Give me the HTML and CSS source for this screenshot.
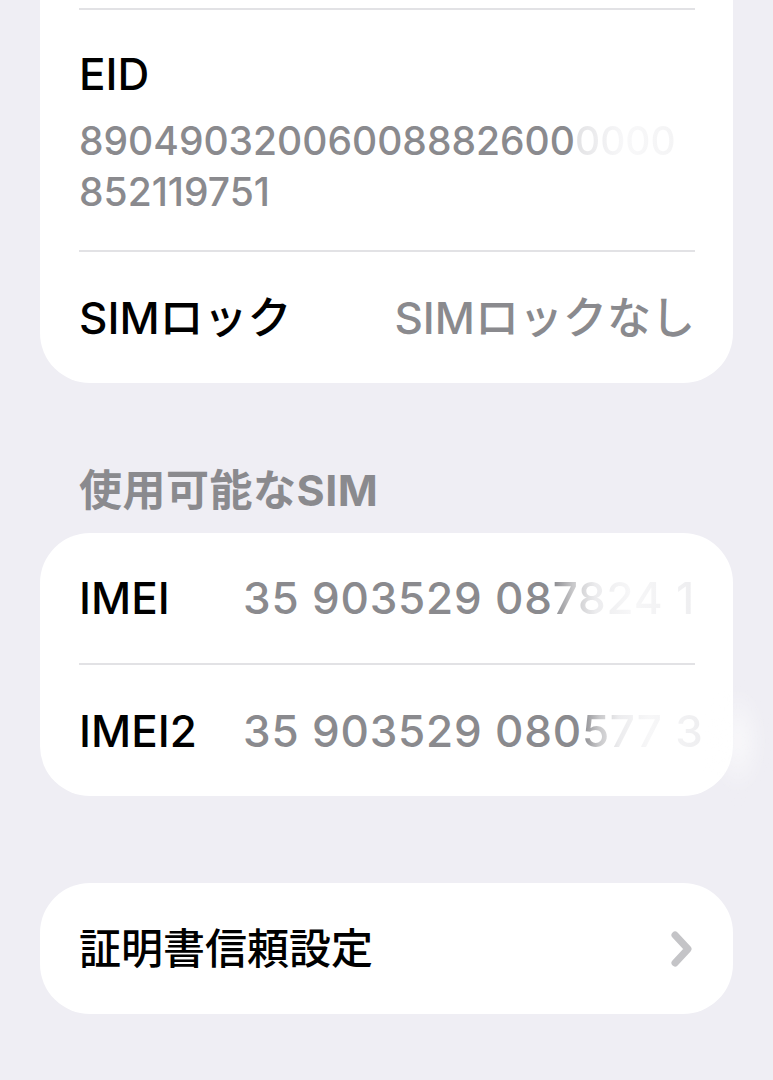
FILE: index.html
```html
<!DOCTYPE html>
<html lang="ja">
<head>
    <meta charset="UTF-8">
    <meta name="viewport" content="width=device-width, initial-scale=1.0">
    <title>情報</title>
    <link rel="stylesheet" href="styles.css">
</head>
<body>
    <div class="screen">
        <div class="card card-top">
            <div class="row row-eid">
                <div class="label">EID</div>
                <div class="eid-value">89049032006008882600<span class="fade fade-eid">0000</span><br>852119751</div>
            </div>
            <div class="row">
                <div class="label">SIMロック</div>
                <div class="value">SIMロックなし</div>
            </div>
        </div>

        <div class="section-title">使用可能なSIM</div>

        <div class="card card-glow">
            <div class="row row-first">
                <div class="label imei-label">IMEI</div>
                <div class="value imei">35 903529 08<span class="fade fade-imei">7824 1</span></div>
            </div>
            <div class="row">
                <div class="label imei-label">IMEI2</div>
                <div class="value imei">35 903529 080<span class="fade fade-imei">577 3</span></div>
            </div>
        </div>

        <div class="card card-link">
            <div class="row row-first">
                <div class="label label-kanji">証明書信頼設定</div>
                <svg class="chevron" width="26" height="38" viewBox="0 0 26 38">
                    <path d="M6 5 L19 19 L6 33" fill="none" stroke="#c4c4c7" stroke-width="7" stroke-linecap="round" stroke-linejoin="round"/>
                </svg>
            </div>
        </div>
    </div>
</body>
</html>
```

FILE: styles.css
```css
body {
    margin: 0;
    padding: 0;
    background: #efeef4;
    font-family: Inter, "Noto Sans CJK JP", sans-serif;
    color: #000;
    overflow: hidden;
}

.screen {
    padding: 0 40px;
    height: 1080px;
    box-sizing: border-box;
}

.card {
    background: #fff;
    border-radius: 50px;
    position: relative;
}

.card-top {
    border-radius: 0 0 50px 50px;
    padding-top: 8px;
}

.row {
    display: flex;
    align-items: center;
    justify-content: space-between;
    margin: 0 38px 0 39px;
    height: 131px;
    border-top: 2px solid #e2e2e5;
}

.row-first {
    border-top: none;
    height: 130px;
}

.card-link .row-first {
    height: 131px;
}

.row-eid {
    display: block;
    height: auto;
    padding: 38px 0 33px;
}

.label {
    font-size: 44px;
    line-height: 52px;
    font-weight: 500;
    white-space: nowrap;
}

.label-kanji {
    font-size: 42px;
}

.eid-value {
    margin-top: 15px;
    font-size: 39px;
    line-height: 51px;
    font-weight: 500;
    color: #8a8a8e;
    white-space: nowrap;
}

.value {
    font-size: 44px;
    line-height: 52px;
    font-weight: 500;
    color: #8a8a8e;
    white-space: nowrap;
}

.imei-label {
    width: 164px;
    flex: none;
}

.imei {
    flex: 1;
    letter-spacing: 0.8px;
}

.fade {
    -webkit-background-clip: text;
    background-clip: text;
    color: transparent;
}

.fade-eid {
    background-image: linear-gradient(90deg, #e2e2e4 0%, #efeff1 25%, #f8f8f9 50%, #f4f4f5 100%);
}

.fade-imei {
    background-image: linear-gradient(90deg, #8a8a8e 0%, #c8c8ca 14%, #ececee 30%, #f7f7f8 55%, #eeeef0 100%);
}

.section-title {
    margin: 82px 0 18px 39px;
    font-size: 43px;
    line-height: 50px;
    font-weight: 700;
    letter-spacing: 0.5px;
    color: #8a8a8e;
}

.card-glow::after {
    content: '';
    position: absolute;
    right: -30px;
    bottom: 0;
    width: 50px;
    height: 110px;
    background: radial-gradient(ellipse, rgba(255, 255, 255, 0.7) 0%, rgba(255, 255, 255, 0) 70%);
    filter: blur(8px);
}

.card-link {
    margin-top: 87px;
}

.chevron {
    flex: none;
}
```
